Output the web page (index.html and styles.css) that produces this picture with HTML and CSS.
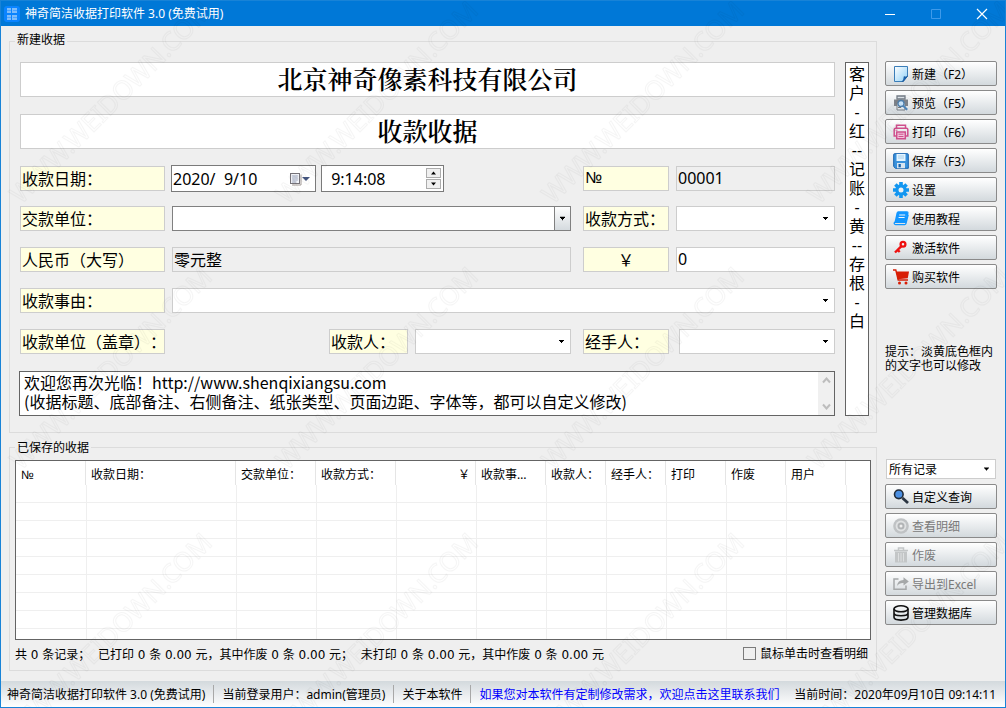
FILE: index.html
```html
<!DOCTYPE html>
<html lang="zh-CN">
<head>
<meta charset="utf-8">
<title>神奇简洁收据打印软件 3.0 (免费试用)</title>
<link rel="stylesheet" href="styles.css">
</head>
<body>
<div class="window">
  <header class="titlebar">
    <svg class="app-icon" viewBox="0 0 16 16" width="16" height="16" aria-hidden="true">
      <rect width="16" height="16" rx="3" fill="#0a84ff"/>
      <g fill="#7dbcfb"><rect x="3" y="2" width="4" height="5"/><rect x="8" y="2" width="5" height="5"/><rect x="3" y="9" width="4" height="5"/><rect x="8" y="9" width="5" height="5"/></g>
      <g stroke="#4aa3ff"><path d="M3 4.500h4M9 4.500h4M3 11.500h4M9 11.500h4"/></g>
    </svg>
    <h1 class="caption">神奇简洁收据打印软件 3.0 (免费试用)</h1>
    <div class="window-buttons">
      <button type="button" aria-label="最小化"><svg width="10" height="10" viewBox="0 0 10 10"><path d="M0 5.500h10" stroke="#fff"/></svg></button>
      <button type="button" aria-label="最大化" disabled><svg width="10" height="10" viewBox="0 0 10 10"><path d="M.5.500h9v9h-9z" fill="none" stroke="#3e9aea"/></svg></button>
      <button type="button" aria-label="关闭"><svg width="12" height="12" viewBox="0 0 12 12"><path d="M1 1l10 10M11 1L1 11" stroke="#fff" stroke-width="1.200"/></svg></button>
    </div>
  </header>

  <div class="content">
    <main class="main">
      <section class="group group-new">
        <h2 class="group-title">新建收据</h2>
        <div class="receipt">
          <form class="form">
            <input class="field heading" type="text" aria-label="公司名称" value="北京神奇像素科技有限公司">
            <input class="field heading heading-second" type="text" aria-label="收据标题" value="收款收据">

            <div class="row row-first">
              <input class="field tag" type="text" aria-label="日期标题" value="收款日期：">
              <div class="datetime">
                <div class="picker date">
                  <input type="text" aria-label="收款日期" value="2020/  9/10">
                  <button type="button" aria-label="打开日历">
                    <svg width="22" height="14" viewBox="0 0 22 14"><path d="M12 2.500v10.500H3" fill="none" stroke="#a39a96"/><rect x="1.500" y="1.500" width="9" height="10" fill="#f3f5fa" stroke="#77747a"/><path d="M3 4h6M3 6h6M3 8h6M3 10h4" stroke="#9aa2bb" stroke-width=".8"/><path d="M5 3v8M7 3v8" stroke="#b4bacb" stroke-width=".6"/><path d="M13 5h8l-4 4z" fill="#44557f"/></svg>
                  </button>
                </div>
                <div class="picker time">
                  <input type="text" aria-label="收款时间" value=" 9:14:08">
                  <span class="spin">
                    <button type="button" aria-label="增加"><svg width="7" height="4" viewBox="0 0 7 4"><path d="M1 3.500h5L3.500.5z"/></svg></button>
                    <button type="button" aria-label="减少"><svg width="7" height="4" viewBox="0 0 7 4"><path d="M1 .5h5L3.500 3.500z"/></svg></button>
                  </span>
                </div>
              </div>
              <input class="field tag numero" type="text" aria-label="编号标题" value="№">
              <input class="field readonly" type="text" aria-label="编号" value="00001" readonly>
            </div>

            <div class="row">
              <input class="field tag" type="text" aria-label="交款单位标题" value="交款单位：">
              <select class="field combo combo-raised" aria-label="交款单位"><option></option></select>
              <input class="field tag" type="text" aria-label="收款方式标题" value="收款方式：">
              <select class="field combo" aria-label="收款方式"><option></option></select>
            </div>

            <div class="row">
              <input class="field tag" type="text" aria-label="大写金额标题" value="人民币（大写）">
              <input class="field readonly" type="text" aria-label="大写金额" value="零元整" readonly>
              <input class="field tag center" type="text" aria-label="金额标题" value="￥">
              <input class="field" type="text" aria-label="金额" value="0">
            </div>

            <div class="row">
              <input class="field tag" type="text" aria-label="收款事由标题" value="收款事由：">
              <select class="field combo wide" aria-label="收款事由"><option></option></select>
            </div>

            <div class="row">
              <input class="field tag" type="text" aria-label="收款单位标题" value="收款单位（盖章）：">
              <div class="payee">
                <input class="field tag" type="text" aria-label="收款人标题" value="收款人：">
                <select class="field combo" aria-label="收款人"><option></option></select>
              </div>
              <input class="field tag" type="text" aria-label="经手人标题" value="经手人：">
              <select class="field combo handler" aria-label="经手人"><option></option></select>
            </div>

            <div class="memo">
              <textarea aria-label="底部备注" rows="2">欢迎您再次光临！http://www.shenqixiangsu.com
(收据标题、底部备注、右侧备注、纸张类型、页面边距、字体等，都可以自定义修改)</textarea>
              <div class="scrollbar" aria-hidden="true">
                <svg width="9" height="7" viewBox="0 0 9 7"><path d="M1 5.500l3.500-4 3.500 4" fill="none" stroke="#bdbdbd" stroke-width="2"/></svg>
                <svg width="9" height="7" viewBox="0 0 9 7"><path d="M1 1.500l3.500 4 3.500-4" fill="none" stroke="#bdbdbd" stroke-width="2"/></svg>
              </div>
            </div>
          </form>
          <textarea class="side-note" aria-label="右侧备注">客
户
-
红
--
记
账
-
黄
--
存
根
-
白</textarea>
        </div>
      </section>

      <section class="group group-saved">
        <h2 class="group-title">已保存的收据</h2>
        <div class="grid">
          <table>
            <colgroup><col class="c70"><col class="c150"><col class="c80"><col class="c80"><col class="c80"><col class="c70"><col class="c60"><col class="c60"><col class="c60"><col class="c60"><col class="c60"><col></colgroup>
            <thead><tr><th class="numero">№</th><th>收款日期：</th><th>交款单位：</th><th>收款方式：</th><th class="money">￥</th><th>收款事…</th><th>收款人：</th><th>经手人：</th><th>打印</th><th>作废</th><th>用户</th><th></th></tr></thead>
            <tbody>
              <tr><td></td><td></td><td></td><td></td><td></td><td></td><td></td><td></td><td></td><td></td><td></td><td></td></tr>
              <tr><td></td><td></td><td></td><td></td><td></td><td></td><td></td><td></td><td></td><td></td><td></td><td></td></tr>
              <tr><td></td><td></td><td></td><td></td><td></td><td></td><td></td><td></td><td></td><td></td><td></td><td></td></tr>
              <tr><td></td><td></td><td></td><td></td><td></td><td></td><td></td><td></td><td></td><td></td><td></td><td></td></tr>
              <tr><td></td><td></td><td></td><td></td><td></td><td></td><td></td><td></td><td></td><td></td><td></td><td></td></tr>
              <tr><td></td><td></td><td></td><td></td><td></td><td></td><td></td><td></td><td></td><td></td><td></td><td></td></tr>
              <tr><td></td><td></td><td></td><td></td><td></td><td></td><td></td><td></td><td></td><td></td><td></td><td></td></tr>
              <tr><td></td><td></td><td></td><td></td><td></td><td></td><td></td><td></td><td></td><td></td><td></td><td></td></tr>
              <tr class="partial"><td></td><td></td><td></td><td></td><td></td><td></td><td></td><td></td><td></td><td></td><td></td><td></td></tr>
            </tbody>
          </table>
        </div>
        <div class="summary">
          <p>共 0 条记录；  已打印 0 条 0.00 元，其中作废 0 条 0.00 元；  未打印 0 条 0.00 元，其中作废 0 条 0.00 元</p>
          <label class="check"><input type="checkbox">鼠标单击时查看明细</label>
        </div>
      </section>
    </main>

    <aside class="sidebar">
      <div class="buttons">
        <button type="button" class="btn">
          <svg width="16" height="16" viewBox="0 0 16 16"><defs><linearGradient id="page" x2="1" y2="1"><stop stop-color="#fff"/><stop offset="1" stop-color="#8fd0f7"/></linearGradient></defs><path d="M1.500.5h13v10l-5 5h-8z" fill="url(#page)" stroke="#3a7db8"/><path d="M14.500 10c-1.500 1.500-3 .8-3.500.6.2 1.900-.6 3.900-2 4.900h1.500z" fill="#1565b8" stroke="#1b5796" stroke-width=".7"/></svg>
          新建（F2）</button>
        <button type="button" class="btn">
          <svg width="16" height="16" viewBox="0 0 16 16"><path d="M4 1h8v3H4z" fill="#dde4ea" stroke="#737b85" stroke-width="1.300"/><path d="M1 4.500h14V11H1z" fill="#7d8289"/><path d="M4 8h8v7H4z" fill="#e3e8ec" stroke="#767c83"/><circle cx="8" cy="8.500" r="3" fill="#c9e4fa" stroke="#4d7fad" stroke-width="1.300"/><path d="M10.200 10.800l4 4" stroke="#4d87bd" stroke-width="2"/><path d="M5 12.500h3" stroke="#777"/></svg>
          预览（F5）</button>
        <button type="button" class="btn">
          <svg width="16" height="16" viewBox="0 0 16 16" fill="none" stroke="#cf4e8c" stroke-width="1.500"><path d="M3.500 4V1.200h9V4"/><path d="M3.500 12H1.200V5.500q0-1.300 1.300-1.300h11q1.300 0 1.300 1.300V12h-2.300"/><path d="M3.700 8h8.600v6.800H3.700z" fill="#f1c4dc"/><path d="M5.500 10.200h5M5.500 12.500h5M2.500 6.200h2" stroke-width="1"/></svg>
          打印（F6）</button>
        <button type="button" class="btn">
          <svg width="16" height="16" viewBox="0 0 16 16"><path d="M.7 1.500q0-.8.8-.8h13q.8 0 .8.800v13.800H2.500L.7 13.500z" fill="#3a92dc" stroke="#1461ad"/><path d="M3.500 1h9v7h-9z" fill="#e4f5ff"/><path d="M5 3h6M5 5h6" stroke="#a8cee9"/><path d="M4 10h8v5.200H4z" fill="#d8e5f0"/><path d="M5.500 11h2.300v3.300H5.500z" fill="#1461ad"/></svg>
          保存（F3）</button>
        <button type="button" class="btn">
          <svg width="16" height="16" viewBox="0 0 16 16"><g stroke="#1296f0" stroke-width="3.600"><path d="M8 0v16M0 8h16M2.400 2.400l11.200 11.200M13.600 2.400L2.400 13.600"/></g><circle cx="8" cy="8" r="5.700" fill="#1296f0"/><circle cx="8" cy="8" r="2.500" fill="#eef1f3"/></svg>
          设置</button>
        <button type="button" class="btn">
          <svg width="16" height="16" viewBox="0 0 16 16"><path d="M4.500 1H14q1 0 .8 1l-2 8.500q-.2.800-1.200.8H2.300q-1.300 0-1 1.300.3 1 1.300 1h9q1 0 1.300-1l2.300-9" fill="none" stroke="#1296ff" stroke-width="1.400"/><path d="M4.500 1H14.500L12.500 11.300H1.500L3.500 2q.2-1 1-1z" fill="#1296ff"/><path d="M6.200 4h6M5.600 6.500h6" stroke="#eef6fc"/></svg>
          使用教程</button>
        <button type="button" class="btn">
          <svg width="16" height="16" viewBox="0 0 16 16"><circle cx="10" cy="4.300" r="2.400" fill="none" stroke="#ee1111" stroke-width="2.300"/><path d="M8.200 6.300L2 12.500M4.700 10l2 2" stroke="#ee1111" stroke-width="2.400"/></svg>
          激活软件</button>
        <button type="button" class="btn">
          <svg width="16" height="16" viewBox="0 0 16 16"><path d="M0 1h2.800l2.400 10H15" fill="none" stroke="#d81e06" stroke-width="1.400"/><path d="M3.300 2.500H16l-1.200 6.800-10 .9z" fill="#d81e06"/><circle cx="6.500" cy="14" r="1.500" fill="#d81e06"/><circle cx="13" cy="14" r="1.500" fill="#d81e06"/></svg>
          购买软件</button>
      </div>
      <p class="hint">提示：淡黄底色框内的文字也可以修改</p>
      <select class="filter combo" aria-label="记录筛选"><option>所有记录</option></select>
      <div class="buttons">
        <button type="button" class="btn">
          <svg width="16" height="16" viewBox="0 0 16 16"><path d="M9.500 9l5.500 5" stroke="#2b3542" stroke-width="2.800"/><circle cx="5.800" cy="5.300" r="4.300" fill="#4b8fe2" stroke="#202b38" stroke-width="1.600"/></svg>
          自定义查询</button>
        <button type="button" class="btn" disabled>
          <svg width="16" height="16" viewBox="0 0 16 16"><circle cx="8" cy="8" r="7.800" fill="#bfc2c4"/><circle cx="8" cy="8" r="5.400" fill="#dfe1e2"/><circle cx="8" cy="8" r="3.500" fill="#b1b4b6"/><circle cx="8" cy="8" r="1.500" fill="#eee"/></svg>
          查看明细</button>
        <button type="button" class="btn" disabled>
          <svg width="16" height="16" viewBox="0 0 16 16"><path d="M1 3.500h14M5.500 3V1h5v2" fill="none" stroke="#c3c6c7" stroke-width="1.500"/><path d="M2 4.500h12v11H2z" fill="#c3c6c7"/><path d="M5.500 6v8.500M8 6v8.500M10.500 6v8.500" stroke="#dddfe0"/></svg>
          作废</button>
        <button type="button" class="btn" disabled>
          <svg width="16" height="16" viewBox="0 0 16 16"><path d="M5.500 3H1v10.200h12V9.500" fill="none" stroke="#a5a8a9" stroke-width="1.500"/><path d="M4 10q.6-6 6.500-6V1.300L15.800 5.500l-5.300 4V7Q6 6.800 4 10z" fill="#a5a8a9"/></svg>
          导出到Excel</button>
        <button type="button" class="btn">
          <svg width="16" height="16" viewBox="0 0 16 16" fill="none" stroke="#111" stroke-width="1.600"><ellipse cx="8" cy="3.800" rx="7" ry="3"/><path d="M1 3.800v8.500c0 3.700 14 3.700 14 0V3.800M1 8c0 3.600 14 3.600 14 0"/></svg>
          管理数据库</button>
      </div>
    </aside>
  </div>

  <footer class="statusbar">
    <span>神奇简洁收据打印软件 3.0 (免费试用)</span>
    <span>当前登录用户：admin(管理员)</span>
    <span>关于本软件</span>
    <a href="#contact">如果您对本软件有定制修改需求，欢迎点击这里联系我们</a>
    <time datetime="2020-09-10T09:14:11">当前时间：2020年09月10日 09:14:11</time>
  </footer>

  <svg class="watermark" aria-hidden="true">
    <defs>
      <pattern id="mark" x="0" y="-58" width="266" height="266" patternUnits="userSpaceOnUse">
        <text transform="translate(20 262) rotate(-45)">WWW.WEIDOWN.COM</text>
      </pattern>
    </defs>
    <rect width="100%" height="100%" fill="url(#mark)"/>
  </svg>
</div>
</body>
</html>
```

FILE: styles.css
```css
* { box-sizing: border-box; }

body, h1, h2, p { margin: 0; }

body,
input,
select,
textarea,
button {
  font-family: "Noto Sans", "Noto Sans CJK SC", sans-serif;
  font-size: 12px;
  color: #000;
  text-spacing-trim: space-all;
}

input,
select,
textarea,
button {
  margin: 0;
  padding: 0;
  border: 0;
  border-radius: 0;
  outline: 0;
}

.window {
  position: relative;
  display: flex;
  flex-direction: column;
  min-height: 100vh;
  background: #efefef;
  border: 1px solid #1883d7;
}

.titlebar {
  display: flex;
  align-items: center;
  gap: 5px;
  height: 25px;
  padding-left: 3px;
  background: #0078d7;
}

.caption {
  flex: 1;
  padding-bottom: 2px;
  font-size: 12px;
  font-weight: 400;
  color: #fff;
}

.window-buttons { display: flex; }

.window-buttons button {
  display: grid;
  place-items: center;
  width: 46px;
  height: 25px;
  background: none;
}

.content {
  flex: 1;
  display: flex;
  gap: 8px;
  padding: 6px 8px 10px;
}

.main {
  flex: 1;
  min-width: 0;
  display: flex;
  flex-direction: column;
}

.group {
  position: relative;
  border: 1px solid #dcdcdc;
}

.group-new {
  margin-top: 9px;
  padding: 20px 7px 16px 9px;
}

.group-saved {
  margin-top: 14px;
  padding: 12px 5px 5px;
}

.group-title {
  position: absolute;
  top: -10px;
  left: 5px;
  padding: 0 2px;
  background: #efefef;
  font-size: 12px;
  font-weight: 400;
  line-height: 16px;
}

.group-saved .group-title { top: -8px; }

.receipt {
  display: flex;
  gap: 10px;
}

.form {
  flex: 1;
  min-width: 0;
  display: flex;
  flex-direction: column;
  padding-left: 1px;
}

.field {
  width: 100%;
  min-width: 0;
  height: 25px;
  padding: 0 1px 2px;
  background: #fff;
  border: 1px solid #cdcdcd;
  font-size: 16px;
}

.heading {
  height: 35px;
  padding-bottom: 4px;
  text-align: center;
  font-family: "Noto Serif CJK SC", "Noto Sans CJK SC", serif;
  font-size: 25px;
  font-weight: 600;
}

.heading-second { margin-top: 17px; }

.row {
  display: grid;
  grid-template-columns: 145px 1fr 86px 159px;
  column-gap: 7px;
  align-items: center;
  margin-top: 16px;
}

.row-first + .row { margin-top: 14px; }

.row > :nth-child(2):not(.wide) { margin-right: 5px; width: auto; }

.tag { background: #ffffe1; }

.numero { font-family: "Liberation Sans", "Noto Sans", sans-serif; }

.readonly { background: #efefef; }

.center { text-align: center; }

.wide { grid-column: 2 / -1; }

.datetime {
  display: flex;
  gap: 5px;
  margin-left: -1px;
}

.picker {
  display: flex;
  align-items: center;
  height: 27px;
  padding: 1px 2px;
  background: #fff;
  border: 1px solid #7a7a7a;
}

.picker input {
  flex: 1;
  min-width: 0;
  font-size: 16px;
  white-space: pre;
}

.date { width: 145px; padding: 1px 4px 1px 1px; }

.time { width: 123px; padding-left: 5px; }

.date button {
  display: grid;
  background: none;
}

.spin {
  display: grid;
  gap: 1px;
}

.spin button {
  display: grid;
  place-items: center;
  width: 15px;
  height: 10px;
  background: #f0f0f0;
  border: 1px solid #acacac;
}

.combo {
  appearance: none;
  background: #fff url("data:image/svg+xml,%3Csvg xmlns='http://www.w3.org/2000/svg' width='17' height='23'%3E%3Cpath d='M6 10h5v1H6zM7 11h3v1H7zM8 12h1v1H8z'/%3E%3C/svg%3E") no-repeat right center;
}

.combo-raised {
  border-color: #808080;
  background-image: url("data:image/svg+xml,%3Csvg xmlns='http://www.w3.org/2000/svg' width='17' height='23'%3E%3ClinearGradient id='g' x2='0' y2='1'%3E%3Cstop stop-color='%23fff'/%3E%3Cstop offset='1' stop-color='%23d3d9dd'/%3E%3C/linearGradient%3E%3Cpath fill='url(%23g)' d='M0 0h17v23H0z'/%3E%3Cpath fill='%23808080' d='M0 0h1v23H0z'/%3E%3Cpath d='M6 10h5v1H6zM7 11h3v1H7zM8 12h1v1H8z'/%3E%3C/svg%3E");
  background-origin: border-box;
  background-size: 17px 25px;
}

.payee {
  display: flex;
  justify-content: flex-end;
  gap: 7px;
}

.payee .tag { width: 79px; }

.payee .combo { width: 156px; }

.row .handler {
  justify-self: end;
  width: 156px;
}

.memo {
  display: flex;
  margin: 17px 0 0 -1px;
  background: #fff;
  border: 1px solid #646464;
}

.memo textarea {
  flex: 1;
  height: 43px;
  padding: 1px 4px;
  background: none;
  font-family: "Noto Sans CJK SC", sans-serif;
  font-size: 16px;
  line-height: 19px;
  white-space: pre;
  overflow: hidden;
  resize: none;
}

.scrollbar {
  display: flex;
  flex-direction: column;
  justify-content: space-between;
  align-items: center;
  width: 16px;
  padding: 5px 0;
  background: #f0f0f0;
}

.side-note {
  width: 24px;
  padding: 2px 0;
  background: #fff;
  border: 1px solid #646464;
  font-size: 16px;
  line-height: 19px;
  text-align: center;
  overflow: hidden;
  resize: none;
}

.grid {
  background: #fff;
  border: 1px solid #646464;
}

.grid table {
  width: 100%;
  table-layout: fixed;
  border-collapse: separate;
  border-spacing: 0;
}

.c60 { width: 60px; }
.c70 { width: 70px; }
.c80 { width: 80px; }
.c150 { width: 150px; }

.grid th {
  height: 24px;
  padding: 3px 5px 0;
  border-right: 1px solid #e5e5e5;
  font-weight: 400;
  line-height: 20px;
  text-align: left;
  white-space: nowrap;
}

.grid th:last-child { border-right: 0; }

.grid .money { text-align: right; }

.grid td {
  height: 18px;
  padding: 0;
  border-left: 1px solid #efefef;
  border-bottom: 1px solid #efefef;
}

.grid td:first-child { border-left: 0; }

.grid .partial td {
  height: 10px;
  border-bottom: 0;
}

.summary {
  display: flex;
  justify-content: space-between;
  align-items: center;
  height: 24px;
  margin-top: 1px;
}

.summary p {
  font-family: "DejaVu Sans", "Noto Sans CJK SC", sans-serif;
  white-space: pre;
}

.check {
  display: flex;
  align-items: center;
  gap: 4px;
  padding-right: 3px;
}

.check input {
  appearance: none;
  width: 13px;
  height: 13px;
  border: 1px solid #7a7a7a;
}

.sidebar {
  width: 112px;
  display: flex;
  flex-direction: column;
  padding-top: 29px;
}

.buttons {
  display: flex;
  flex-direction: column;
  gap: 4px;
}

.btn {
  display: flex;
  align-items: center;
  gap: 3px;
  height: 25px;
  padding: 0 7px;
  background: linear-gradient(#fff, #d3d9dd);
  border: 1px solid #8a8a8a;
  border-radius: 2px;
  white-space: nowrap;
}

.btn:disabled { color: #7a7a7a; }

.hint {
  margin-top: 56px;
  line-height: 14px;
}

.filter {
  height: 20px;
  margin: 86px 1px 5px;
  padding-left: 2px;
  border: 1px solid #cdcdcd;
}

.statusbar {
  display: flex;
  align-items: center;
  height: 26px;
  padding: 0 9px 0 6px;
  background: linear-gradient(#d3d9dd, #fff);
  white-space: nowrap;
}

.statusbar span {
  margin-right: 8px;
  padding-right: 8px;
  border-right: 1px solid #a8a8a8;
}

.statusbar a {
  color: #00f;
  text-decoration: none;
}

.statusbar time { margin-left: auto; }

.watermark {
  position: absolute;
  inset: 0;
  width: 100%;
  height: 100%;
  pointer-events: none;
}

.watermark text {
  font-family: "Noto Sans", sans-serif;
  font-size: 26px;
  fill: none;
  stroke: #000;
  stroke-opacity: 0.04;
}
```
